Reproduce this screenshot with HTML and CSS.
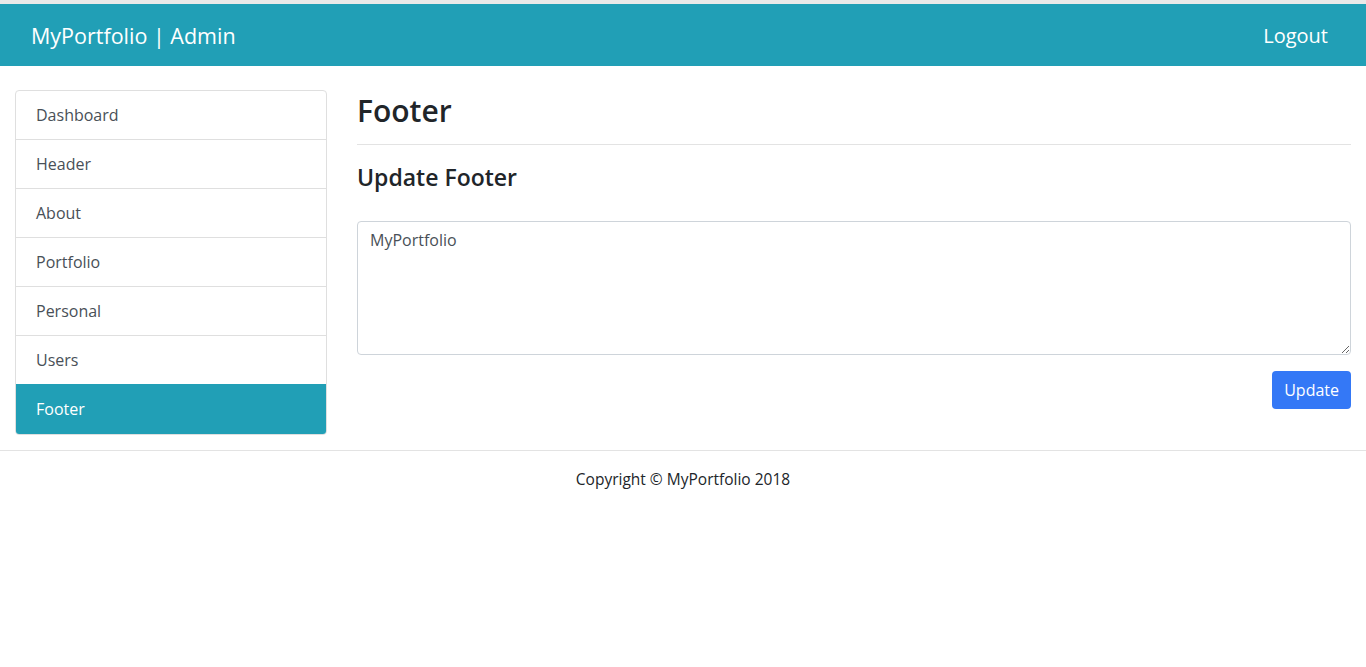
FILE: index.html
```html
<!DOCTYPE html>
<html lang="en">
<head>
<meta charset="utf-8">
<title>MyPortfolio | Admin</title>
<link rel="stylesheet" href="styles.css">
</head>
<body>
<div class="topstrip"></div>
<nav class="navbar">
  <a class="brand" href="#">MyPortfolio | Admin</a>
  <a class="logout" href="#">Logout</a>
</nav>
<div class="content">
  <aside class="sidebar">
    <ul class="list-group">
      <li class="item">Dashboard</li>
      <li class="item">Header</li>
      <li class="item">About</li>
      <li class="item">Portfolio</li>
      <li class="item">Personal</li>
      <li class="item">Users</li>
      <li class="item active">Footer</li>
    </ul>
  </aside>
  <main class="main">
    <h1 class="title">Footer</h1>
    <hr class="rule">
    <h3 class="subtitle">Update Footer</h3>
    <form class="form">
      <textarea class="textarea" rows="5">MyPortfolio</textarea>
      <div class="actions"><button type="button" class="btn">Update</button></div>
    </form>
  </main>
</div>
<footer class="footer">Copyright © MyPortfolio 2018</footer>
</body>
</html>
```

FILE: styles.css
```css
* { box-sizing: border-box; }
html, body { margin: 0; padding: 0; }
body {
  font-family: "Open Sans", "Noto Sans", sans-serif;
  font-size: 16px;
  line-height: 1.5;
  color: #212529;
  background: #fff;
}
.topstrip { height: 4px; background: #e9e9e9; }
.navbar {
  height: 62px;
  background: #219fb6;
  display: flex;
  align-items: center;
  justify-content: space-between;
  padding: 2px 38px 0 31px;
}
.brand, .logout { color: #fff; text-decoration: none; font-size: 20px; }
.brand { font-size: 21.5px; }
.content {
  display: flex;
  padding: 24px 15px 0;
  gap: 30px;
}
.sidebar { width: 312px; flex: none; }
.list-group {
  list-style: none;
  margin: 0;
  padding: 0;
  border: 1px solid #dfdfdf;
  border-radius: 4px;
  overflow: hidden;
}
.item {
  height: 49px;
  padding: 12px 20px;
  color: #495057;
  border-top: 1px solid #dfdfdf;
}
.item:first-child { border-top: none; height: 48px; }
.item.active { background: #219fb6; color: #fff; border-top-color: #219fb6; height: 50px; }
.main { flex: 1; min-width: 0; }
.title { margin: 0; font-size: 30px; font-weight: 600; line-height: 1.2; padding-top: 3px; }
.rule { border: 0; border-top: 1px solid #e3e3e3; margin: 15px 0 19px; }
.subtitle { margin: 0 0 29px; font-size: 23px; font-weight: 600; line-height: 1.2; }
.textarea {
  display: block;
  width: 100%;
  height: 134px;
  padding: 6px 12px;
  border: 1px solid #ced4da;
  border-radius: 4px;
  font: inherit;
  color: #495057;
  resize: vertical;
}
.actions { display: flex; justify-content: flex-end; margin-top: 16px; }
.btn {
  background: #3478f6;
  color: #fff;
  border: 0;
  border-radius: 4px;
  font: inherit;
  height: 38px;
  padding: 0 12px;
}
.footer {
  margin-top: 15px;
  border-top: 1px solid #e3e3e3;
  text-align: center;
  padding: 17px 0 16px;
  font-size: 15.5px;
}
```
